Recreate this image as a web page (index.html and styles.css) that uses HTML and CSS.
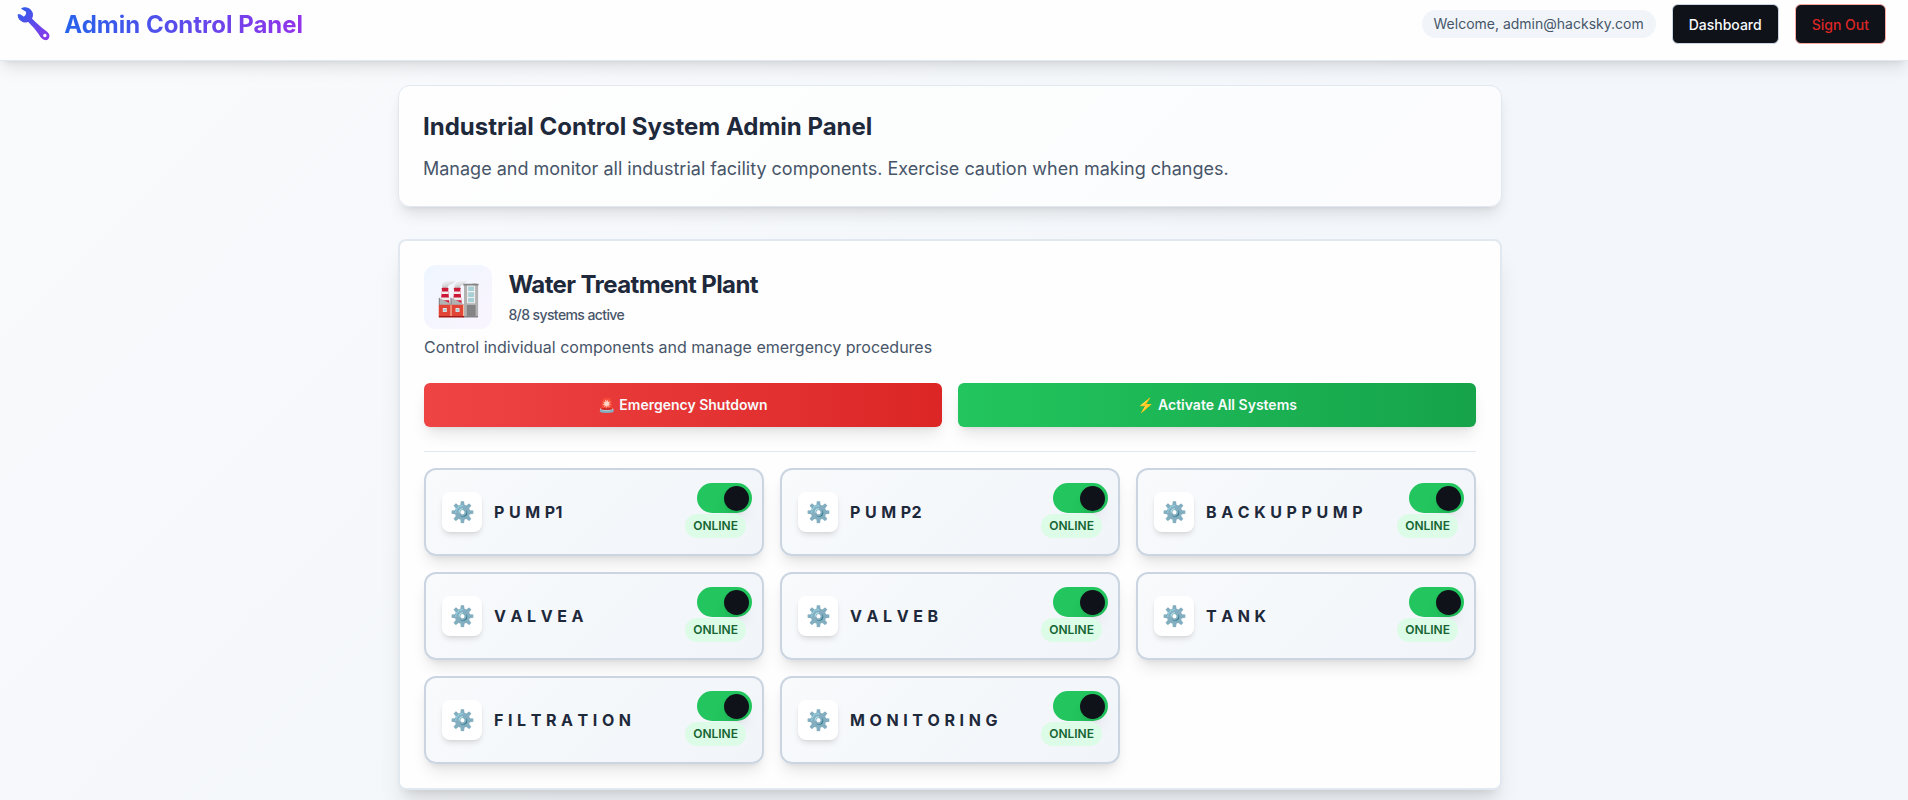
FILE: index.html
```html
<!DOCTYPE html>
<html lang="en">
<head>
<meta charset="utf-8">
<title>Admin Control Panel</title>
<link rel="stylesheet" href="styles.css">
</head>
<body>
<header class="topbar">
  <div class="brand"><span class="brand-icon">🔧</span><h1 class="brand-name">Admin Control Panel</h1></div>
  <div class="account"><span class="welcome">Welcome, admin@hacksky.com</span><button class="btn">Dashboard</button><button class="btn btn-exit">Sign Out</button></div>
</header>
<main class="content">
  <section class="intro"><h2>Industrial Control System Admin Panel</h2><p>Manage and monitor all industrial facility components. Exercise caution when making changes.</p></section>
  <section class="plant">
    <div class="plant-head"><div class="plant-icon">🏭</div><div class="plant-title"><h2>Water Treatment Plant</h2><p>8/8 systems active</p></div></div>
    <p class="plant-desc">Control individual components and manage emergency procedures</p>
    <div class="actions"><button class="action stop">🚨 Emergency Shutdown</button><button class="action start">⚡ Activate All Systems</button></div>
    <div class="grid">
      <div class="unit"><span class="gear">⚙️</span><span class="name">P U M P1</span><div class="state"><span class="switch"><i class="knob"></i></span><span class="badge">ONLINE</span></div></div>
      <div class="unit"><span class="gear">⚙️</span><span class="name">P U M P2</span><div class="state"><span class="switch"><i class="knob"></i></span><span class="badge">ONLINE</span></div></div>
      <div class="unit"><span class="gear">⚙️</span><span class="name">B A C K U P P U M P</span><div class="state"><span class="switch"><i class="knob"></i></span><span class="badge">ONLINE</span></div></div>
      <div class="unit"><span class="gear">⚙️</span><span class="name">V A L V E A</span><div class="state"><span class="switch"><i class="knob"></i></span><span class="badge">ONLINE</span></div></div>
      <div class="unit"><span class="gear">⚙️</span><span class="name">V A L V E B</span><div class="state"><span class="switch"><i class="knob"></i></span><span class="badge">ONLINE</span></div></div>
      <div class="unit"><span class="gear">⚙️</span><span class="name">T A N K</span><div class="state"><span class="switch"><i class="knob"></i></span><span class="badge">ONLINE</span></div></div>
      <div class="unit"><span class="gear">⚙️</span><span class="name">F I L T R A T I O N</span><div class="state"><span class="switch"><i class="knob"></i></span><span class="badge">ONLINE</span></div></div>
      <div class="unit"><span class="gear">⚙️</span><span class="name">M O N I T O R I N G</span><div class="state"><span class="switch"><i class="knob"></i></span><span class="badge">ONLINE</span></div></div>
    </div>
  </section>
</main>
</body>
</html>
```
FILE: styles.css
```css
* { box-sizing: border-box; margin: 0; padding: 0; }
body {
  height: 800px;
  overflow: hidden;
  font-family: Inter, "Noto Color Emoji", sans-serif;
  color: #1e293b;
  background: linear-gradient(135deg, #f8fafc, #f8fafc 8%, #f3f6fa 60%, #f3f6fa);
}
.topbar {
  position: relative;
  display: flex;
  justify-content: space-between;
  height: 61px;
  padding: 0 22px 12px 15px;
  align-items: center;
  background: #fefefe;
  border-bottom: 1px solid #e2e8f0;
  box-shadow: 0 10px 15px -3px rgba(0,0,0,.1), 0 4px 6px -4px rgba(0,0,0,.1);
}
.brand { display: flex; align-items: center; gap: 12px; }
.brand-icon, .brand-name {
  color: transparent;
  background: linear-gradient(to right, #2563eb, #9333ea);
  -webkit-background-clip: text;
  background-clip: text;
}
.brand-icon { margin-bottom: 2px; font-size: 30px; line-height: 36px; background-image: linear-gradient(135deg, #2563eb, #9333ea); }
.brand-name { padding-top: 2px; font-size: 24px; line-height: 32px; font-weight: 700; }
.account { display: flex; align-items: center; gap: 16px; }
.welcome { padding: 4px 12px; border-radius: 14px; background: #f1f5f9; color: #475569; font-size: 14px; line-height: 20px; }
.btn {
  height: 40px;
  padding: 1px 16px 0;
  border: 1px solid #cbd5e1;
  border-radius: 6px;
  background: #0f1219;
  color: #f8fafc;
  font: 500 14px/20px Inter, sans-serif;
}
.btn-exit { border-color: #fca5a5; color: #dc2626; }
.content { width: 1104px; margin: 24px 0 0 398px; }
.intro {
  height: 122px;
  padding: 25px 24px 24px;
  border: 1px solid #e2e8f0;
  border-radius: 12px;
  background: linear-gradient(135deg, #fefefe, #fcfdfd 50%, #fcfcff);
  box-shadow: 0 10px 15px -3px rgba(0,0,0,.1), 0 4px 6px -4px rgba(0,0,0,.1);
}
.intro h2 { margin-bottom: 12px; font-size: 24px; line-height: 32px; font-weight: 700; }
.intro p { color: #475569; font-size: 18px; line-height: 28px; }
.plant {
  height: 551px;
  margin-top: 32px;
  padding: 24px;
  border: 2px solid #e2e8f0;
  border-radius: 8px;
  background: #fefefe;
  box-shadow: 0 20px 25px -5px rgba(0,0,0,.1), 0 8px 10px -6px rgba(0,0,0,.1);
}
.plant-head { display: flex; align-items: center; gap: 16px; }
.plant-icon { width: 68px; height: 64px; padding-left: 1px; border-radius: 12px; text-align: center; font-size: 36px; line-height: 64px; background: linear-gradient(135deg, #eff6ff, #faf5ff); }
.plant-title { padding-left: .4px; letter-spacing: -.6px; }
.plant-title h2 { font-size: 24px; line-height: 32px; font-weight: 700; }
.plant-title p { margin-top: 4px; color: #475569; font-size: 14px; line-height: 20px; font-weight: 500; }
.plant-desc { margin-top: 6px; color: #475569; font-size: 16px; line-height: 24px; }
.actions { display: grid; grid-template-columns: 1fr 1fr; gap: 16px; margin-top: 24px; padding-bottom: 24px; border-bottom: 1px solid #e2e8f0; }
.action { height: 44px; border: 0; border-radius: 6px; color: #f8fafc; font: 600 14px/20px Inter, "Noto Color Emoji", sans-serif; box-shadow: 0 10px 15px -3px rgba(0,0,0,.1), 0 4px 6px -4px rgba(0,0,0,.1); }
.stop { background: linear-gradient(to right, #ef4444, #dc2626); }
.start { background: linear-gradient(to right, #22c55e, #16a34a); }
.grid { display: grid; grid-template-columns: repeat(3, 1fr); gap: 16px; margin-top: 16px; }
.unit {
  display: flex;
  align-items: center;
  height: 88px;
  padding: 0 10px 0 16px;
  border: 2px solid #cbd5e1;
  border-radius: 12px;
  background: linear-gradient(135deg, #f8fafc, #f1f5f9);
  box-shadow: 0 10px 15px -3px rgba(0,0,0,.1), 0 4px 6px -4px rgba(0,0,0,.1);
}
.gear { width: 40px; height: 40px; padding-left: 1px; border-radius: 8px; background: #fff; text-align: center; font-size: 20px; line-height: 40px; box-shadow: 0 4px 6px -1px rgba(0,0,0,.1), 0 2px 4px -2px rgba(0,0,0,.1); }
.name { margin-left: 12px; font-size: 16px; line-height: 24px; font-weight: 700; letter-spacing: .4px; }
.state { display: flex; flex-direction: column; align-items: flex-end; gap: 1px; height: 58px; margin: 0 0 0 auto; }
.switch { display: flex; width: 55px; height: 30px; padding: 3px; justify-content: flex-end; border-radius: 15px; background: #22c55e; }
.knob { width: 25px; height: 25px; border-radius: 50%; background: #0f1219; box-shadow: 0 10px 15px -3px rgba(0,0,0,.1), 0 4px 6px -4px rgba(0,0,0,.1); }
.badge { margin-right: 6px; padding: 4px 8px; border-radius: 12px; background: #dcfce7; color: #166534; font-size: 12px; line-height: 16px; font-weight: 600; }
```
